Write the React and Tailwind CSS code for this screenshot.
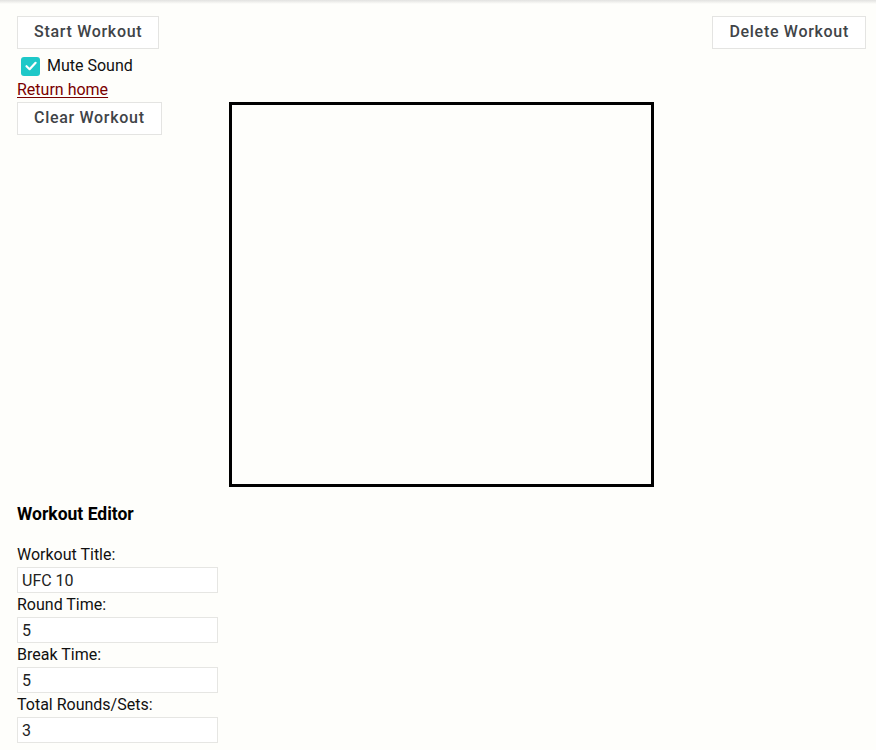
import { useState } from "react";

const font = { fontFamily: "Roboto, 'Liberation Sans', sans-serif" };

const btn =
  "h-[33px] px-[16px] pb-[2px] border border-[#e4e4e2] bg-white text-[16px] font-medium tracking-[0.7px] text-[#3f4448] leading-[30px]";

function Field({ label, value }) {
  return (
    <div>
      <div className="h-[24px] leading-[24px] text-[16px] text-[#111]">{label}</div>
      <input
        defaultValue={value}
        className="block w-[201px] h-[26px] border border-[#e6e6e3] bg-white px-[4px] text-[16px] text-[#222] outline-none"
      />
    </div>
  );
}

export default function App() {
  const [muted, setMuted] = useState(true);

  return (
    <div className="relative min-h-[750px] bg-[#fefefb]" style={font}>
      {/* top shadow */}
      <div className="absolute inset-x-0 top-0 h-[4px] bg-gradient-to-b from-[#e2e2e0] to-[#fefefb]" />

      <div className="pl-[17px] pr-[10px] pt-[16px]">
        <div className="flex items-start justify-between">
          <button className={btn}>Start Workout</button>
          <button className={btn}>Delete Workout</button>
        </div>

        <label className="mt-[5px] flex items-center h-[24px] pl-[4px] cursor-pointer">
          <span
            onClick={() => setMuted(!muted)}
            className={`flex h-[19px] w-[19px] items-center justify-center rounded-[3px] ${muted ? "bg-[#1ec8c8]" : "border border-gray-400 bg-white"}`}
          >
            {muted && (
              <svg width="14" height="14" viewBox="0 0 14 14">
                <path d="M2.5 7.2 L5.6 10.2 L11.6 3.8" fill="none" stroke="white" strokeWidth="2.2" strokeLinecap="round" strokeLinejoin="round" />
              </svg>
            )}
          </span>
          <span className="ml-[7px] text-[16px] text-[#111] leading-none">Mute Sound</span>
        </label>

        <a href="#" className="block h-[24px] leading-[24px] text-[16px] text-[#7a0000] underline underline-offset-[2px] w-fit">
          Return home
        </a>

        <div className="flex items-start">
          <button className={btn}>Clear Workout</button>
          <div className="ml-[67px] w-[425px] h-[385px] border-[3px] border-black bg-[#fefefb]" />
        </div>

        <h2 className="mt-[17px] text-[17.5px] font-bold text-black leading-[20px]">Workout Editor</h2>

        <div className="mt-[19px]">
          <Field label="Workout Title:" value="UFC 10" />
          <Field label="Round Time:" value="5" />
          <Field label="Break Time:" value="5" />
          <Field label="Total Rounds/Sets:" value="3" />
        </div>
      </div>
    </div>
  );
}
